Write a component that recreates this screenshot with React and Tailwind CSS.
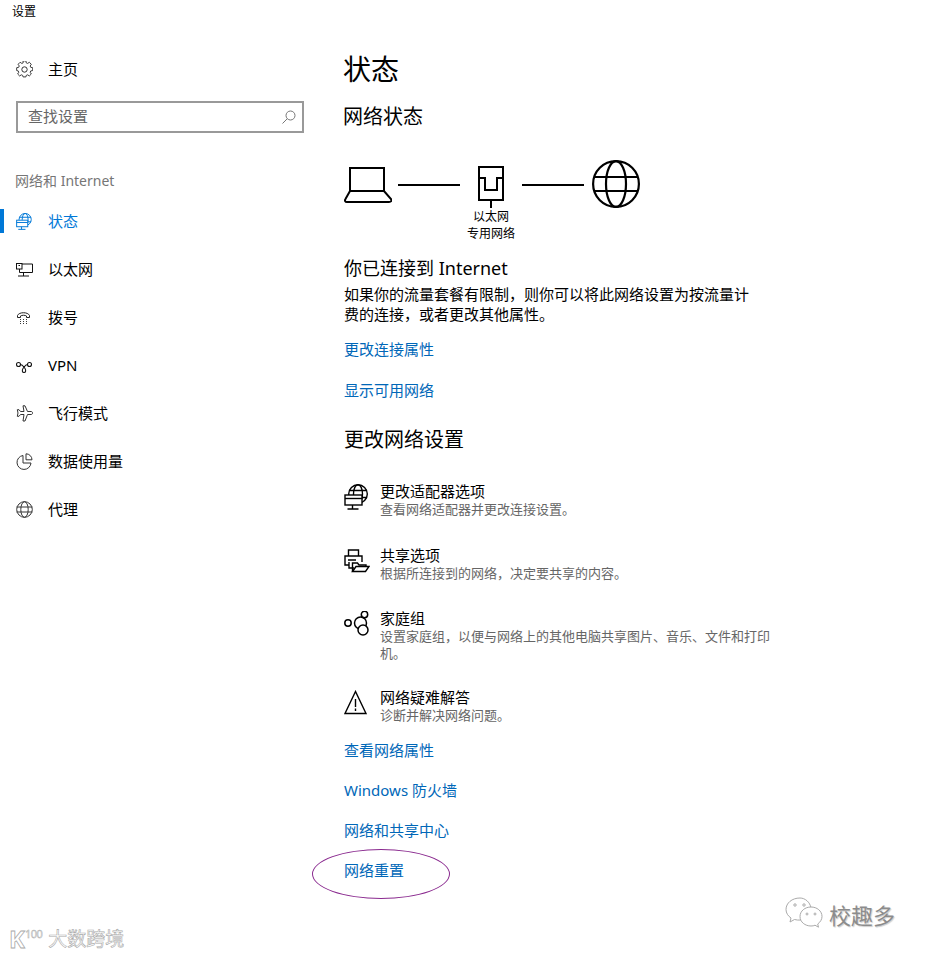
const navIconClass = 'w-[17px] h-[17px] shrink-0';
const rowIconClass = 'w-[26px] h-[26px]';

function GearIcon() {
  return (
    <svg className={navIconClass} viewBox="0 0 17 17" fill="none" stroke="#333" strokeWidth="1">
      <circle cx="8.5" cy="8.5" r="2.7" />
      <path d="M7 .8h3l.4 2.1 1.4.6 1.8-1.2 2.1 2.1-1.2 1.8.6 1.4 2.1.4v3l-2.1.4-.6 1.4 1.2 1.8-2.1 2.1-1.8-1.2-1.4.6-.4 1.6H7l-.4-1.6-1.4-.6-1.8 1.2-2.1-2.1 1.2-1.8-.6-1.4L.3 11V8l2.1-.4.6-1.4-1.2-1.8 2.1-2.1 1.8 1.2 1.4-.6z" transform="translate(.4 -.9) scale(.95)" />
    </svg>
  );
}

// globe behind a small monitor, used for the status nav item and the adapter row
function AdapterIcon({ color = '#000', className = rowIconClass, width = 1.4 }) {
  return (
    <svg className={className} viewBox="0 0 26 26" fill="none" stroke={color} strokeWidth={width}>
      <circle cx="14" cy="10" r="9.300" />
      <ellipse cx="14" cy="10" rx="4.500" ry="9.300" />
      <path d="M5 6.500h18M5 13.500h18" />
      <rect x="1" y="11" width="17" height="10" fill="#fff" />
      <path d="M1 14.500h17" />
      <path d="M8.500 21v4M3.500 25h11" />
    </svg>
  );
}

function EthernetIcon() {
  return (
    <svg className={navIconClass} viewBox="0 0 17 17" fill="none" stroke="#111" strokeWidth="1">
      <path d="M5.500 3h11v8.500H3.500V8" />
      <path d="M7.500 11.500v3.500M2 15h11" />
      <rect x=".5" y="2.500" width="5.500" height="5.500" fill="#fff" />
      <path d="M2.500 4.500h1.500" />
    </svg>
  );
}

function DialIcon() {
  return (
    <svg className={navIconClass} viewBox="0 0 17 17" fill="none" stroke="#222" strokeWidth="1">
      <path d="M1.500 8.500v-2C3 2.800 12 2.800 13.500 6.500v2h-3V7C9 6 6 6 4.500 7v1.500z" />
      <path d="M4 10.500h1M7 10.500h1M10 10.500h1M4 12.500h1M7 12.500h1M10 12.500h1M4 14.500h1M7 14.500h1M10 14.500h1" strokeWidth=".9" />
    </svg>
  );
}

function VpnIcon() {
  return (
    <svg className={navIconClass} viewBox="0 0 17 17" fill="none" stroke="#111" strokeWidth="1.100">
      <circle cx="2.500" cy="7.500" r="2" />
      <circle cx="13.500" cy="7.500" r="2" />
      <path d="M4.500 7.500c2 0 3 2 4.500 4 1 1.500 1 4-1 4s-2-2.500-1-4C8.500 9.500 9.500 7.500 11.500 7.500" />
    </svg>
  );
}

function PlaneIcon() {
  return (
    <svg className={navIconClass} viewBox="0 0 17 17" fill="none" stroke="#333" strokeWidth="1">
      <path d="M7 .800h2l2.500 5.700H15c1 0 1.700.800 1.700 1.500S16 9.500 15 9.500h-3.500L9 16H7l1-6.500H4.500L3 11.300H1.300L2 8 1.300 4.700H3l1.500 1.800H8z" />
    </svg>
  );
}

function PieIcon() {
  return (
    <svg className={navIconClass} viewBox="0 0 17 17" fill="none" stroke="#333" strokeWidth="1">
      <path d="M7 2.500A7 7 0 1 0 15 10H7z" />
      <path d="M10 .800a6 6 0 0 1 6 6h-6z" />
    </svg>
  );
}

function GlobeIcon() {
  return (
    <svg className={navIconClass} viewBox="0 0 17 17" fill="none" stroke="#333" strokeWidth="1">
      <circle cx="8.500" cy="8.500" r="7.800" />
      <ellipse cx="8.500" cy="8.500" rx="3.700" ry="7.800" />
      <path d="M.700 6h15.600M.700 11h15.600" />
    </svg>
  );
}

function BigGlobeIcon() {
  return (
    <svg className="w-[48px] h-[48px]" viewBox="0 0 48 48" fill="none" stroke="#000" strokeWidth="2.200">
      <circle cx="24" cy="24" r="22.900" />
      <ellipse cx="24" cy="24" rx="10" ry="22.900" />
      <path d="M2 17h44M2 31h44" />
    </svg>
  );
}

function SearchIcon() {
  return (
    <svg className="w-[14px] h-[14px]" viewBox="0 0 14 14" fill="none" stroke="#767676" strokeWidth="1">
      <circle cx="8.500" cy="5.500" r="4.500" />
      <path d="M5.200 8.800L.500 13.500" />
    </svg>
  );
}

function LaptopIcon() {
  return (
    <svg className="w-[48px] h-[37px]" viewBox="0 0 48 37" fill="none" stroke="#000" strokeWidth="2">
      <path d="M6 24V1h34v24" />
      <path d="M6 24h34l7 8c1 2 0 3-2 3H3c-2 0-2.500-1.500-1.500-3z" />
    </svg>
  );
}

function PortIcon() {
  return (
    <svg className="w-[26px] h-[42px]" viewBox="0 0 26 42" fill="none" stroke="#000" strokeWidth="2">
      <rect x="1" y="1" width="24" height="33" />
      <path d="M1 12h6v12h12V12h6" />
      <path d="M13 34v8" />
    </svg>
  );
}

function ShareIcon() {
  return (
    <svg className={rowIconClass} viewBox="0 0 26 26" fill="none" stroke="#000" strokeWidth="1.400">
      <path d="M4.500 8V2h10v6" />
      <path d="M5 17H1V8h17v6" />
      <path d="M4 12h8M5 14v6h5" />
      <path d="M8.500 23.500V15h5l1.500 2h7v3" />
      <path d="M8.500 23.500l3.500-5h13l-3.500 5z" fill="#fff" />
    </svg>
  );
}

function HomeGroupIcon() {
  return (
    <svg className={rowIconClass} viewBox="0 0 26 26" fill="none" stroke="#000" strokeWidth="1.500">
      <circle cx="4" cy="12" r="3.200" />
      <circle cx="16.500" cy="12" r="6" />
      <circle cx="20.500" cy="3.500" r="3.200" fill="#fff" />
      <circle cx="19" cy="19" r="5" fill="#fff" />
    </svg>
  );
}

function WarnIcon() {
  return (
    <svg className={rowIconClass} viewBox="0 0 26 26" fill="none" stroke="#000" strokeWidth="1.400">
      <path d="M11.500 1.500L1 23.500h21z" />
      <path d="M11.500 9v8M11.500 18.500V21" />
    </svg>
  );
}

function WeChatMark() {
  return (
    <svg className="w-[38px] h-[36px]" viewBox="0 0 38 36" fill="#fff" stroke="#aaa" strokeWidth="1">
      <path d="M15 1C7 1 1 6 1 12.500c0 3.500 2 6.500 5 8.500l-1 4 4.500-2.500c2 .5 4 .800 6 .500C24 22 27 17 26 11 25 5 20 1 15 1z" />
      <circle cx="10" cy="8" r="1.200" />
      <circle cx="19" cy="8" r="1.200" />
      <path d="M26 10c-6 0-11 4-11 9.500S20 29 26 29c1.500 0 3-.200 4-.800l3.500 2-.800-3.200c2.500-1.800 4.300-4.500 4.300-7.500C37 14 32 10 26 10z" />
      <circle cx="22" cy="17" r="1" />
      <circle cx="30" cy="17" r="1" />
    </svg>
  );
}

const navItems = [
  { label: '状态', icon: <AdapterIcon color="#0078d7" className={navIconClass} width={1.500} />, active: true },
  { label: '以太网', icon: <EthernetIcon /> },
  { label: '拨号', icon: <DialIcon /> },
  { label: 'VPN', icon: <VpnIcon /> },
  { label: '飞行模式', icon: <PlaneIcon /> },
  { label: '数据使用量', icon: <PieIcon /> },
  { label: '代理', icon: <GlobeIcon /> },
];

const settingRows = [
  {
    title: '更改适配器选项',
    desc: '查看网络适配器并更改连接设置。',
    icon: <AdapterIcon />,
    className: 'mt-[27px]',
  },
  {
    title: '共享选项',
    desc: '根据所连接到的网络，决定要共享的内容。',
    icon: <ShareIcon />,
    className: 'mt-[27px]',
  },
  {
    title: '家庭组',
    desc: '设置家庭组，以便与网络上的其他电脑共享图片、音乐、文件和打印机。',
    icon: <HomeGroupIcon />,
    className: 'mt-[26px]',
  },
  {
    title: '网络疑难解答',
    desc: '诊断并解决网络问题。',
    icon: <WarnIcon />,
    className: 'mt-[25px]',
  },
];

const bottomLinks = ['查看网络属性', 'Windows 防火墙', '网络和共享中心'];

export default function App() {
  return (
    <div className="relative w-[927px] h-[956px] overflow-hidden bg-white text-black font-['Noto_Sans','Noto_Sans_CJK_SC',sans-serif]">
      <div className="flex">
        {/* Left: sidebar */}
        <aside className="w-[320px] shrink-0">
          <div className="h-[24px] pl-[12px] text-[12px] leading-[24px]">设置</div>
          <div className="mt-[21px] h-[48px] flex items-center gap-[15px] pl-[16px] text-[15px]">
            <GearIcon />
            <span>主页</span>
          </div>
          <div className="mt-[8px] ml-[16px] w-[288px] h-[32px] border-2 border-[#999] flex items-center justify-between pl-[10px] pr-[6px] pb-[1px] text-[15px] text-[#666]">
            <span>查找设置</span>
            <SearchIcon />
          </div>
          <div className="mt-[37px] pl-[15px] text-[14px] leading-[22px] text-[#767676]">网络和 Internet</div>
          <nav className="mt-[5px]">
            {navItems.map((item) => (
              <div key={item.label} className="h-[48px] flex items-center">
                <div className={`w-[4px] h-[24px] ${item.active ? 'bg-[#0078d7]' : ''}`}></div>
                <div className={`pl-[12px] flex items-center gap-[15px] text-[15px] ${item.active ? 'text-[#0078d7]' : 'text-black'}`}>
                  {item.icon}
                  <span>{item.label}</span>
                </div>
              </div>
            ))}
          </nav>
        </aside>

        {/* Right: status */}
        <main className="pl-[24px] w-[607px]">
          <h1 className="mt-[48px] -ml-px text-[28px] leading-[42px]">状态</h1>
          <h2 className="mt-[13px] text-[20px] leading-[28px] -ml-px">网络状态</h2>

          <div className="mt-[29px] flex items-start">
            <div className="mt-[7px]"><LaptopIcon /></div>
            <div className="mt-[24px] ml-[6px] w-[62px] h-[2px] bg-black"></div>
            <div className="w-[62px] flex flex-col items-center">
              <div className="mt-[6px] -ml-px"><PortIcon /></div>
              <div className="text-[12px] leading-[17px] text-center whitespace-nowrap">
                以太网<br />专用网络
              </div>
            </div>
            <div className="mt-[24px] w-[62px] h-[2px] bg-black"></div>
            <div className="ml-[8px]"><BigGlobeIcon /></div>
          </div>

          <h3 className="mt-[12px] text-[18px] leading-[28px]">你已连接到 Internet</h3>
          <p className="mt-[2px] w-[410px] text-[15px] leading-[20px]">
            如果你的流量套餐有限制，则你可以将此网络设置为按流量计费的连接，或者更改其他属性。
          </p>
          <a className="block mt-[13px] text-[15px] leading-[24px] text-[#0067b8]">更改连接属性</a>
          <a className="block mt-[17px] text-[15px] leading-[24px] text-[#0067b8]">显示可用网络</a>
          <h3 className="mt-[24px] text-[20px] leading-[28px]">更改网络设置</h3>

          {settingRows.map((row) => (
            <div key={row.title} className={`flex gap-[10px] ${row.className}`}>
              <div className="mt-[3px]">{row.icon}</div>
              <div className="w-[392px]">
                <div className="text-[15px] leading-[20px]">{row.title}</div>
                <div className="text-[13px] leading-[17px] text-[#666]">{row.desc}</div>
              </div>
            </div>
          ))}

          <div className="mt-[14px] flex flex-col gap-[16px]">
            {bottomLinks.map((link) => (
              <a key={link} className="block text-[15px] leading-[24px] text-[#0067b8]">{link}</a>
            ))}
            <a className="block text-[15px] leading-[24px] text-[#0067b8]">网络重置</a>
          </div>
        </main>
      </div>

      {/* Annotation and watermarks over the page */}
      <div className="absolute left-[312px] top-[849px] w-[138px] h-[50px] rounded-[50%] border border-[#8a2a8f]"></div>
      <div className="absolute left-[785px] top-[897px] flex items-center gap-[6px]">
        <WeChatMark />
        <span className="text-[22px] text-[#8c8c8c] [text-shadow:1px_1px_1px_#ccc]">校趣多</span>
      </div>
      <div className="absolute left-[9px] top-[925px] flex items-center">
        <span className="text-[24px] leading-[28px] font-bold text-white [-webkit-text-stroke:0.8px_#aaa]">K</span>
        <span className="self-start mt-[3px] text-[11px] leading-[12px] tracking-[-0.5px] text-white [-webkit-text-stroke:0.5px_#aaa]">100</span>
        <span className="ml-[6px] text-[19px] leading-[28px] text-white [-webkit-text-stroke:0.6px_#aaa]">大数跨境</span>
      </div>
    </div>
  );
}
